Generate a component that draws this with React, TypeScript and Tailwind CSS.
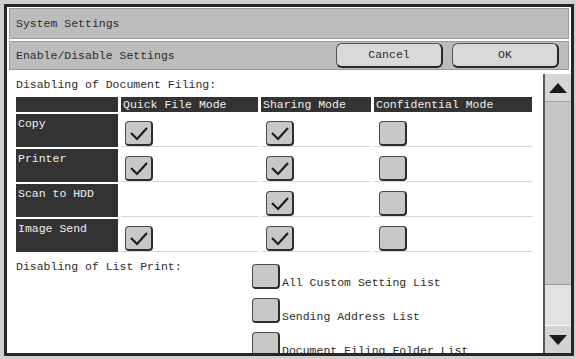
import React from "react"

const mono = { fontFamily: '"Liberation Mono", "Courier New", monospace' }

function CheckBox({ checked }: { checked?: boolean }) {
  return (
    <div className="w-[28px] h-[25px] rounded-[4px] bg-[#c8c8c8] border border-[#4a4a4a] border-b-[2px] border-r-[2px] border-b-[#2e2e2e] border-r-[#2e2e2e] flex items-center justify-center shrink-0">
      {checked && (
        <svg width="22" height="18" viewBox="0 0 22 18">
          <polyline points="3,9 9,15 19,4" fill="none" stroke="#1e1e1e" strokeWidth="2.2" />
        </svg>
      )}
    </div>
  )
}

const rows: { label: string; quick: boolean | null; share: boolean; conf: boolean }[] = [
  { label: "Copy", quick: true, share: true, conf: false },
  { label: "Printer", quick: true, share: true, conf: false },
  { label: "Scan to HDD", quick: null, share: true, conf: false },
  { label: "Image Send", quick: true, share: true, conf: false },
]

const lists = ["All Custom Setting List", "Sending Address List", "Document Filing Folder List"]

export default function App() {
  return (
    <div className="w-[576px] h-[359px] bg-[#cfcfcf] pt-[4px] pl-[4px] text-[11.5px] leading-[14px]" style={mono}>
      <div className="w-[570px] h-[352px] border-[3px] border-[#262626] bg-white flex flex-col overflow-hidden">
        <div className="mx-[2px] mt-[1px] h-[31px] bg-[#bcbcbc] border border-[#9c9c9c] flex items-center pl-[6px] text-[#2c2c2c]">
          System Settings
        </div>
        <div className="mx-[2px] mt-[2px] h-[29px] bg-[#bcbcbc] border border-[#9c9c9c] flex items-center pl-[6px] pr-[9px] text-[#2c2c2c]">
          <span>Enable/Disable Settings</span>
          <div className="ml-auto flex gap-[9px]">
            <button className="w-[107px] h-[25px] rounded-[6px] bg-[#d9d9d9] border border-[#555] border-b-[2px] border-r-[2px] border-b-[#262626] border-r-[#262626] text-[#2c2c2c] text-[11.5px]" style={mono}>
              Cancel
            </button>
            <button className="w-[107px] h-[25px] rounded-[6px] bg-[#d9d9d9] border border-[#555] border-b-[2px] border-r-[2px] border-b-[#262626] border-r-[#262626] text-[#2c2c2c] text-[11.5px]" style={mono}>
              OK
            </button>
          </div>
        </div>
        <div className="flex-1 flex min-h-0">
          <div className="flex-1 pl-[9px] pt-[8px] text-[#2c2c2c]">
            <div>Disabling of Document Filing:</div>
            <div className="mt-[5px] grid grid-cols-[102px_137px_110px_158px] gap-x-[3px] grid-rows-[15px_repeat(4,33px)] gap-y-[2px] w-[516px]">
              <div className="bg-[#333]" />
              <div className="bg-[#333] text-[#f0f0f0] pl-[2px] leading-[15px]">Quick File Mode</div>
              <div className="bg-[#333] text-[#f0f0f0] pl-[2px] leading-[15px]">Sharing Mode</div>
              <div className="bg-[#333] text-[#f0f0f0] pl-[2px] leading-[15px]">Confidential Mode</div>
              {rows.map((r) => (
                <React.Fragment key={r.label}>
                  <div className="bg-[#333] text-[#f0f0f0] pl-[2px] pt-[3px]">{r.label}</div>
                  <div className="border-b border-[#d6d6d6] pl-[4px] pt-[7px]">
                    {r.quick !== null && <CheckBox checked={r.quick} />}
                  </div>
                  <div className="border-b border-[#d6d6d6] pl-[5px] pt-[7px]">
                    <CheckBox checked={r.share} />
                  </div>
                  <div className="border-b border-[#d6d6d6] pl-[5px] pt-[7px]">
                    <CheckBox checked={r.conf} />
                  </div>
                </React.Fragment>
              ))}
            </div>
            <div className="flex mt-[7px]">
              <div className="w-[236px] pt-[1px]">Disabling of List Print:</div>
              <div className="flex flex-col gap-[9px] pt-[5px]">
                {lists.map((l) => (
                  <div key={l} className="flex items-end gap-[2px]">
                    <CheckBox />
                    <span className="leading-[12px]">{l}</span>
                  </div>
                ))}
              </div>
            </div>
          </div>
          <div className="w-[28px] mt-[4px] border-l-[2px] border-[#5a5a5a] flex flex-col">
            <div className="h-[28px] bg-[#d6d6d6] border-b border-[#a0a0a0] flex items-center justify-center">
              <svg width="18" height="10" viewBox="0 0 18 10">
                <polygon points="0,10 9,0 18,10" fill="#1a1a1a" />
              </svg>
            </div>
            <div className="h-[183px] bg-[#c6c6c6] border-b border-[#9a9a9a]" />
            <div className="flex-1 bg-[#e2e2e2] border-b border-[#fafafa]" />
            <div className="h-[27px] bg-[#d4d4d4] flex items-center justify-center">
              <svg width="18" height="10" viewBox="0 0 18 10">
                <polygon points="0,0 18,0 9,10" fill="#1a1a1a" />
              </svg>
            </div>
          </div>
        </div>
      </div>
    </div>
  )
}
